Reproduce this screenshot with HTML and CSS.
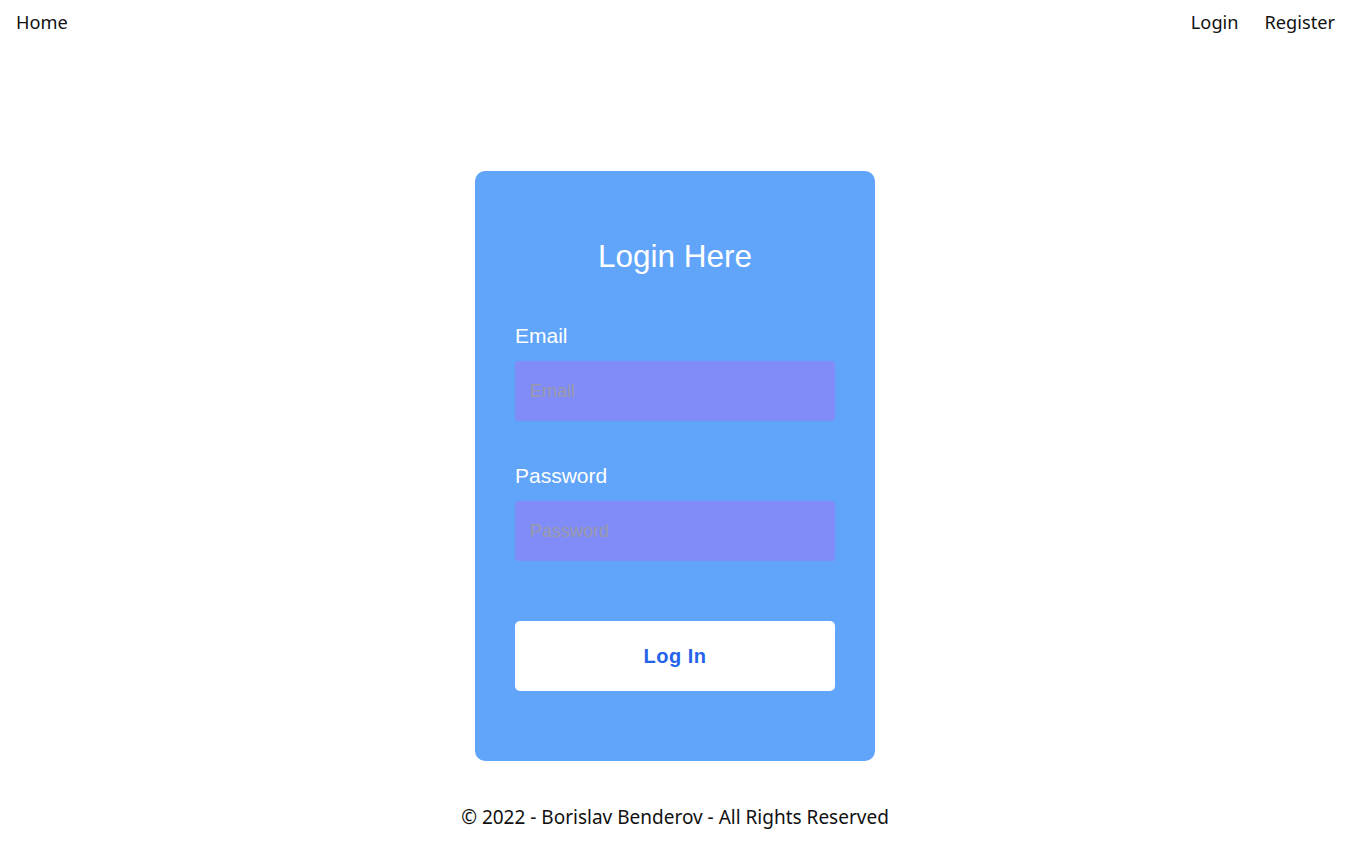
FILE: index.html
```html
<!DOCTYPE html>
<html lang="en">
<head>
<meta charset="utf-8">
<title>Login</title>
<link rel="stylesheet" href="styles.css">
</head>
<body>
<nav class="nav">
  <a class="nav-link" href="#">Home</a>
  <div class="nav-right">
    <a class="nav-link" href="#">Login</a>
    <a class="nav-link" href="#">Register</a>
  </div>
</nav>
<main class="main">
  <form class="card">
    <h3 class="card-title">Login Here</h3>
    <label class="field-label" for="email">Email</label>
    <input class="field-input" id="email" type="text" placeholder="Email">
    <label class="field-label field-label-second" for="password">Password</label>
    <input class="field-input" id="password" type="password" placeholder="Password">
    <button class="login-btn" type="button">Log In</button>
  </form>
</main>
<footer class="footer">© 2022 - Borislav Benderov - All Rights Reserved</footer>
</body>
</html>
```
FILE: styles.css
```css
* { box-sizing: border-box; }
html, body { margin: 0; padding: 0; background: #fff; }
body {
  font-family: "Noto Sans", "Liberation Sans", sans-serif;
  color: #111;
  padding-right: 4px;
}
.nav {
  display: flex;
  justify-content: space-between;
  align-items: center;
  height: 44px;
  padding: 0 15px 0 16px;
}
.nav-right { display: flex; gap: 26px; }
.nav-link {
  color: #111;
  text-decoration: none;
  font-size: 18.2px;
}
.main {
  display: flex;
  justify-content: center;
  padding-top: 127px;
}
.card {
  width: 400px;
  background: #60a5fa;
  border-radius: 10px;
  padding: 64px 40px 70px;
  display: flex;
  flex-direction: column;
  font-family: "Liberation Sans", Arial, sans-serif;
}
.card-title {
  margin: 0 0 47px;
  text-align: center;
  color: #fff;
  font-weight: 400;
  font-size: 31.5px;
  line-height: 42px;
}
.field-label {
  color: #fff;
  font-size: 21px;
  line-height: 24px;
  margin-bottom: 13px;
}
.field-label-second { margin-top: 43px; }
.field-input {
  height: 60px;
  border: none;
  border-radius: 3px;
  background: #818cf8;
  padding: 0 15px;
  font-family: "Liberation Sans", Arial, sans-serif;
  font-size: 18px;
  color: #fff;
  outline: none;
}
.field-input::placeholder { color: #9a9aa8; }
.login-btn {
  margin-top: 60px;
  height: 70px;
  border: none;
  border-radius: 5px;
  background: #fff;
  color: #2563eb;
  font-family: "Liberation Sans", Arial, sans-serif;
  font-weight: 700;
  font-size: 20px;
  letter-spacing: 0.5px;
  cursor: pointer;
}
.footer {
  text-align: center;
  font-size: 19px;
  margin-top: 44px;
  line-height: 24px;
}
```
